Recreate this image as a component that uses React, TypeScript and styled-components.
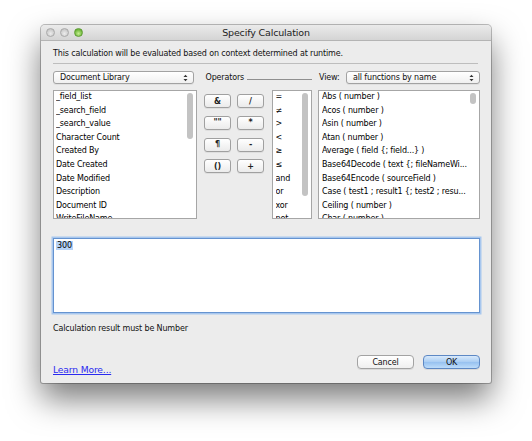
import React from 'react';
import styled, { createGlobalStyle } from 'styled-components';

const Global = createGlobalStyle`
  html, body { margin: 0; padding: 0; background: #fff; }
  body {
    width: 532px; height: 441px; overflow: hidden;
    font-family: "DejaVu Sans", "Noto Sans", sans-serif;
  }
`;

const Stage = styled.div`
  padding: 25px 0 0 41px;
`;

const Window = styled.div`
  width: 450px;
  height: 358px;
  box-sizing: border-box;
  background: #ececec;
  border-radius: 4px 4px 2px 2px;
  box-shadow: 0 0 0 1px rgba(0, 0, 0, 0.25), 0 16px 32px rgba(0, 0, 0, 0.52);
  display: flex;
  flex-direction: column;
  overflow: hidden;
  font-size: 8px;
  letter-spacing: -0.15px;
  color: #111;
`;

const TitleBar = styled.div`
  height: 16px;
  flex: none;
  box-sizing: border-box;
  display: grid;
  grid-template-columns: 1fr auto 1fr;
  align-items: center;
  background: linear-gradient(#ebebeb, #d4d4d4);
  border-bottom: 1px solid #b4b4b4;
  border-radius: 4px 4px 0 0;
`;

const Lights = styled.div`
  display: flex;
  gap: 5px;
  padding-left: 5px;
`;

const Light = styled.span<{ $green?: boolean }>`
  width: 9px;
  height: 9px;
  border-radius: 50%;
  box-sizing: border-box;
  border: 1px solid ${(p) => (p.$green ? '#5f9d35' : '#a9a9a9')};
  background: ${(p) =>
    p.$green
      ? 'radial-gradient(circle at 50% 65%, #c7ee93, #76bc42 60%, #5ea32d)'
      : 'radial-gradient(circle at 50% 65%, #ececec, #cfcfcf 60%, #bdbdbd)'};
`;

const Title = styled.div`
  font-size: 9.5px;
  color: #222;
  white-space: nowrap;
`;

const Content = styled.div`
  flex: 1;
  display: flex;
  flex-direction: column;
  padding: 0 11px 0 12px;
`;

const Desc = styled.div`
  margin-top: 7px;
  line-height: 12px;
  white-space: nowrap;
`;

const Separator = styled.div`
  margin: 3px 2px 0 0;
  height: 1px;
  background: #bdbdbd;
`;

const Columns = styled.div<{ $top: number }>`
  margin-top: ${(p) => p.$top}px;
  display: grid;
  grid-template-columns: 144px 108px 162px;
  column-gap: 6.5px;
`;

const Cell = styled.div`
  display: flex;
  align-items: center;
  min-width: 0;
`;

const ListCell = styled.div`
  display: flex;
  align-items: flex-start;
  min-width: 0;
`;

const Popup = styled.div<{ $w: number }>`
  width: ${(p) => p.$w}px;
  height: 13px;
  box-sizing: border-box;
  border: 1px solid #a2a2a2;
  border-radius: 3px;
  background: linear-gradient(#ffffff, #f0f0f0);
  display: flex;
  align-items: center;
  justify-content: space-between;
  padding: 0 5px 0 6px;
  white-space: nowrap;
  box-shadow: 0 1px 0 rgba(0, 0, 0, 0.05);
  margin-left: auto;
  &:first-child { margin-left: 0; }
`;

const Arrows = () => (
  <svg width="5" height="8" viewBox="0 0 5 8">
    <path d="M0.5 3 L2.5 0.8 L4.5 3 Z M0.5 5 L2.5 7.2 L4.5 5 Z" fill="#333" />
  </svg>
);

const Label = styled.span<{ $pad: number }>`
  padding-left: ${(p) => p.$pad}px;
  white-space: nowrap;
`;

const Rule = styled.div`
  flex: 1;
  height: 1px;
  margin: 4px 0 0 3px;
  background: #8f8f8f;
`;

const ListBox = styled.div<{ $w?: number }>`
  height: 129px;
  box-sizing: border-box;
  ${(p) => (p.$w ? `width: ${p.$w}px; flex: none; margin-left: auto;` : 'width: 100%;')}
  background: #fff;
  border: 1px solid #a6a6a6;
  display: flex;
  overflow: hidden;
`;

const Items = styled.div<{ $pad: number }>`
  flex: 1;
  min-width: 0;
  margin-top: -1px;
  padding-left: ${(p) => p.$pad}px;
  color: #000;
`;

const Item = styled.div`
  height: 13.6px;
  line-height: 13.6px;
  white-space: nowrap;
  overflow: hidden;
`;

const Track = styled.div`
  width: 10px;
  flex: none;
  box-sizing: border-box;
  padding: 2px 2px 0 1px;
`;

const Thumb = styled.div<{ $h: number }>`
  width: 6px;
  height: ${(p) => p.$h}px;
  border-radius: 3px;
  background: #c3c3c3;
`;

const OpGrid = styled.div`
  display: grid;
  grid-template-columns: 27px 27px;
  grid-auto-rows: 14px;
  column-gap: 6px;
  row-gap: 7.8px;
  padding: 4px 0 0 0.5px;
`;

const OpButton = styled.div`
  box-sizing: border-box;
  border: 1px solid #a0a0a0;
  border-radius: 3px;
  background: linear-gradient(#ffffff, #ebebeb);
  display: flex;
  align-items: center;
  justify-content: center;
  font-weight: bold;
  font-size: 8px;
  color: #222;
  box-shadow: 0 1px 0 rgba(0, 0, 0, 0.06);
`;

const Formula = styled.div`
  margin-top: 19px;
  height: 75px;
  box-sizing: border-box;
  background: #fff;
  border: 1px solid #6593d0;
  box-shadow: 0 0 0 1.5px #a8c7ee;
  padding: 1px 2px;
  line-height: 12px;
`;

const Selected = styled.span`
  background: #b6d3f7;
  color: #000;
  padding: 0 1px;
`;

const Result = styled.div`
  margin-top: 10px;
  line-height: 12px;
`;

const Footer = styled.div`
  margin-top: 20px;
  display: flex;
  align-items: flex-start;
`;

const LearnMore = styled.a`
  margin-top: 9px;
  line-height: 12px;
  font-size: 9.2px;
  color: #2a2af0;
  text-decoration: underline;
  cursor: pointer;
`;

const Buttons = styled.div`
  margin-left: auto;
  display: flex;
  gap: 9px;
`;

const PushButton = styled.div<{ $default?: boolean }>`
  width: 57px;
  height: 14px;
  box-sizing: border-box;
  border-radius: 4px;
  display: flex;
  align-items: center;
  justify-content: center;
  color: #111;
  border: 1px solid ${(p) => (p.$default ? '#5d88c4' : '#a3a3a3')};
  background: ${(p) =>
    p.$default
      ? 'linear-gradient(#d8e9fb, #a9cdf3 50%, #96c1f0 51%, #bddcfa)'
      : 'linear-gradient(#ffffff, #f0f0f0)'};
  box-shadow: 0 1px 0 rgba(0, 0, 0, 0.08);
`;

const fields = [
  '_field_list',
  '_search_field',
  '_search_value',
  'Character Count',
  'Created By',
  'Date Created',
  'Date Modified',
  'Description',
  'Document ID',
  'WriteFileName',
];

const ops = ['=', '≠', '>', '<', '≥', '≤', 'and', 'or', 'xor', 'not'];

const funcs = [
  'Abs ( number )',
  'Acos ( number )',
  'Asin ( number )',
  'Atan ( number )',
  'Average ( field {; field...} )',
  'Base64Decode ( text {; fileNameWi...',
  'Base64Encode ( sourceField )',
  'Case ( test1 ; result1 {; test2 ; resu...',
  'Ceiling ( number )',
  'Char ( number )',
];

const opButtons = ['&', '/', '""', '*', '¶', '-', '()', '+'];

export default function App() {
  return (
    <>
      <Global />
      <Stage>
        <Window>
          <TitleBar>
            <Lights>
              <Light />
              <Light />
              <Light $green />
            </Lights>
            <Title>Specify Calculation</Title>
            <div />
          </TitleBar>
          <Content>
            <Desc>This calculation will be evaluated based on context determined at runtime.</Desc>
            <Separator />
            <Columns $top={7}>
              <Cell>
                <Popup $w={141}>
                  <span>Document Library</span>
                  <Arrows />
                </Popup>
              </Cell>
              <Cell>
                <Label $pad={2}>Operators</Label>
                <Rule />
              </Cell>
              <Cell>
                <Label $pad={1}>View:</Label>
                <Popup $w={134}>
                  <span>all functions by name</span>
                  <Arrows />
                </Popup>
              </Cell>
            </Columns>
            <Columns $top={6}>
              <ListCell>
                <ListBox>
                  <Items $pad={2}>
                    {fields.map((f) => (
                      <Item key={f}>{f}</Item>
                    ))}
                  </Items>
                  <Track>
                    <Thumb $h={46} />
                  </Track>
                </ListBox>
              </ListCell>
              <ListCell>
                <OpGrid>
                  {opButtons.map((o) => (
                    <OpButton key={o}>{o}</OpButton>
                  ))}
                </OpGrid>
                <ListBox $w={40}>
                  <Items $pad={3}>
                    {ops.map((o) => (
                      <Item key={o}>{o}</Item>
                    ))}
                  </Items>
                  <Track>
                    <Thumb $h={103} />
                  </Track>
                </ListBox>
              </ListCell>
              <ListCell>
                <ListBox>
                  <Items $pad={3}>
                    {funcs.map((f) => (
                      <Item key={f}>{f}</Item>
                    ))}
                  </Items>
                  <Track>
                    <Thumb $h={11} />
                  </Track>
                </ListBox>
              </ListCell>
            </Columns>
            <Formula>
              <Selected>300</Selected>
            </Formula>
            <Result>Calculation result must be Number</Result>
            <Footer>
              <LearnMore>Learn More...</LearnMore>
              <Buttons>
                <PushButton>Cancel</PushButton>
                <PushButton $default>OK</PushButton>
              </Buttons>
            </Footer>
          </Content>
        </Window>
      </Stage>
    </>
  );
}
